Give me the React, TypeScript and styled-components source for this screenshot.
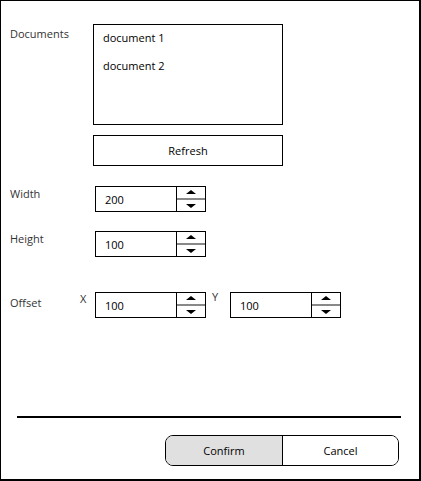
import React from "react";
import styled, { createGlobalStyle } from "styled-components";

const GlobalStyle = createGlobalStyle`
  body {
    margin: 0;
    background: #fff;
    font-family: "Open Sans", "Noto Sans", sans-serif;
  }
`;

const SpinBox: React.FC<{ value: string }> = ({ value }) => (
  <Spin>
    <SpinValue>{value}</SpinValue>
    <SpinButtons>
      <Arrow dir="up" />
      <Arrow dir="down" />
    </SpinButtons>
  </Spin>
);

export default function App() {
  return (
    <>
      <GlobalStyle />
      <Frame>
        <Row>
          <Label drop={2}>Documents</Label>
          <div>
            <ListBox>
              <ListItem>document 1</ListItem>
              <ListItem>document 2</ListItem>
            </ListBox>
            <RefreshButton>Refresh</RefreshButton>
          </div>
        </Row>

        <FieldRow top={20}>
          <Label>Width</Label>
          <Indent>
            <SpinBox value="200" />
          </Indent>
        </FieldRow>

        <FieldRow top={19}>
          <Label>Height</Label>
          <Indent>
            <SpinBox value="100" />
          </Indent>
        </FieldRow>

        <FieldRow top={35}>
          <Label drop={3}>Offset</Label>
          <OffsetGroup>
            <Axis width={15} drop={0}>
              X
            </Axis>
            <SpinBox value="100" />
            <Axis width={24} drop={-2} pad={6}>
              Y
            </Axis>
            <SpinBox value="100" />
          </OffsetGroup>
        </FieldRow>

        <Spacer />
        <Divider />
        <Footer>
          <Segmented>
            <Segment primary>Confirm</Segment>
            <Segment>Cancel</Segment>
          </Segmented>
        </Footer>
      </Frame>
    </>
  );
}

const Frame = styled.div`
  width: 421px;
  height: 481px;
  box-sizing: border-box;
  border: 1px solid #000;
  border-right-width: 2px;
  border-bottom-width: 2px;
  padding: 23px 0 13px 9px;
  display: flex;
  flex-direction: column;
  font-size: 11px;
  color: #000;
`;

const Row = styled.div`
  display: flex;
`;

const FieldRow = styled.div<{ top: number }>`
  display: flex;
  align-items: flex-start;
  margin-top: ${({ top }) => top}px;
`;

const Label = styled.div<{ drop?: number }>`
  width: 83px;
  flex: none;
  color: #333;
  line-height: 16px;
  padding-top: ${({ drop = 0 }) => drop}px;
`;

const ListBox = styled.div`
  width: 190px;
  height: 101px;
  box-sizing: border-box;
  border: 1px solid #000;
  padding: 5px 9px;
`;

const ListItem = styled.div`
  line-height: 16px;
  margin-bottom: 12px;
`;

const RefreshButton = styled.div`
  margin-top: 10px;
  width: 190px;
  height: 31px;
  box-sizing: border-box;
  border: 1px solid #000;
  display: flex;
  align-items: center;
  justify-content: center;
`;

const Indent = styled.div`
  padding-left: 2px;
`;

const OffsetGroup = styled.div`
  display: flex;
  align-items: flex-start;
  margin-left: -13px;
`;

const Axis = styled.div<{ width: number; drop: number; pad?: number }>`
  width: ${({ width }) => width}px;
  box-sizing: border-box;
  padding-left: ${({ pad = 0 }) => pad}px;
  line-height: 14px;
  margin-top: ${({ drop }) => drop}px;
  color: #333;
`;

const Spin = styled.div`
  width: 111px;
  height: 26px;
  box-sizing: border-box;
  border: 1px solid #000;
  display: flex;
`;

const SpinValue = styled.div`
  flex: 1;
  padding-left: 9px;
  display: flex;
  align-items: center;
  border-right: 1px solid #000;
`;

const SpinButtons = styled.div`
  width: 28px;
  display: flex;
  flex-direction: column;
  justify-content: space-between;
  align-items: center;
  background: linear-gradient(#fff 0 11px, #888 11px 13px, #fff 13px);
  padding: 3px 0 3px;
  box-sizing: border-box;
`;

const Arrow = styled.div<{ dir: "up" | "down" }>`
  width: 0;
  height: 0;
  border-left: 5px solid transparent;
  border-right: 5px solid transparent;
  ${({ dir }) =>
    dir === "up"
      ? "border-bottom: 4px solid #000;"
      : "border-top: 4px solid #000;"}
`;

const Spacer = styled.div`
  flex: 1;
`;

const Divider = styled.div`
  margin-left: 7px;
  width: 384px;
  height: 2px;
  background: #000;
`;

const Footer = styled.div`
  display: flex;
  justify-content: flex-end;
  padding-right: 20px;
  margin-top: 17px;
`;

const Segmented = styled.div`
  display: flex;
  height: 31px;
  box-sizing: border-box;
  border: 1px solid #000;
  border-radius: 8px;
  overflow: hidden;
`;

const Segment = styled.div<{ primary?: boolean }>`
  width: 116px;
  display: flex;
  align-items: center;
  justify-content: center;
  background: ${({ primary }) => (primary ? "#e0e0e0" : "#fff")};
  & + & {
    width: 115px;
    border-left: 1px solid #000;
  }
`;
